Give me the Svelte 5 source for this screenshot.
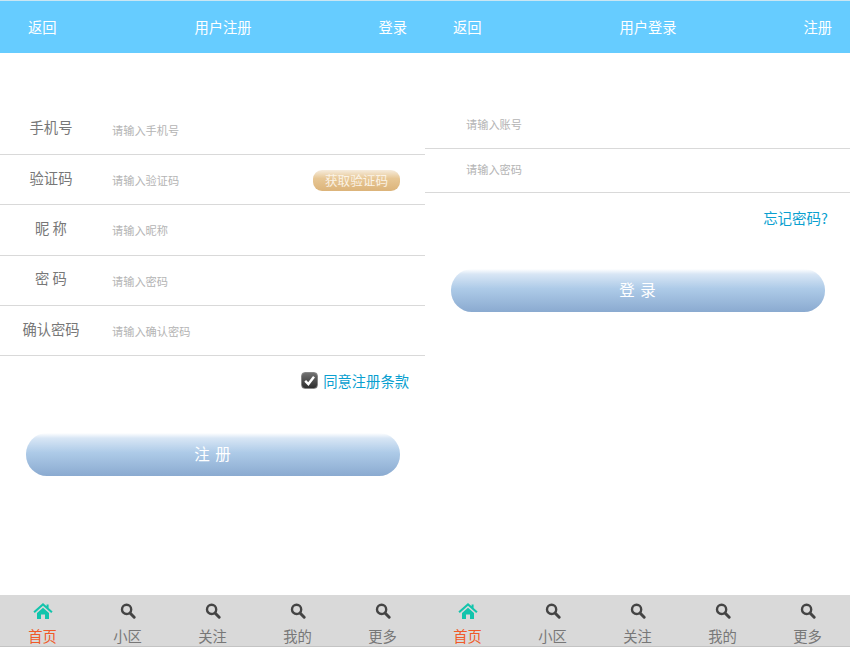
<script lang="ts">
	const registerRows = [
		{ label: '手机号', hint: '请输入手机号' },
		{ label: '验证码', hint: '请输入验证码', code: true },
		{ label: '昵 称', hint: '请输入昵称' },
		{ label: '密 码', hint: '请输入密码' },
		{ label: '确认密码', hint: '请输入确认密码' }
	];
	const loginRows = ['请输入账号', '请输入密码'];
	const tabs = ['首页', '小区', '关注', '我的', '更多'];
</script>

{#snippet header(title: string, action: string)}
	<header class="header">
		<span class="side">返回</span>
		<span class="title">{title}</span>
		<span class="side">{action}</span>
	</header>
{/snippet}

{#snippet footer()}
	<nav class="tabbar">
		{#each tabs as tab, i}
			<div class="tab" class:active={i === 0}>
				{#if i === 0}
					<svg class="icon" viewBox="0 0 20 18" width="20" height="18">
						<path d="M10 1 L13.6 4.2 V2.4 H15.6 V6 L19.6 9.6 L18.2 11 L10 3.8 L1.8 11 L0.4 9.6 Z" fill="#12c4ac" />
						<path d="M4 11 L10 5.8 L16 11 V17 H12 V12.5 H8 V17 H4 Z" fill="#12c4ac" />
					</svg>
				{:else}
					<svg class="icon" viewBox="0 0 20 18" width="20" height="18">
						<circle cx="8.6" cy="7.4" r="4.6" fill="none" stroke="#444" stroke-width="2.4" />
						<path d="M12 11 L16.2 15.2" stroke="#444" stroke-width="3" stroke-linecap="round" />
					</svg>
				{/if}
				<span class="tab-label">{tab}</span>
			</div>
		{/each}
	</nav>
{/snippet}

<div class="screens">
	<section class="pane">
		{@render header('用户注册', '登录')}
		<div class="form register">
			{#each registerRows as row}
				<div class="row">
					<span class="label">{row.label}</span>
					<span class="hint">{row.hint}</span>
					{#if row.code}
						<span class="code-btn">获取验证码</span>
					{/if}
				</div>
			{/each}
		</div>
		<div class="agree">
			<span class="check">
				<svg viewBox="0 0 16 16" width="15" height="15">
					<path d="M3.4 8.4 L6.8 11.8 L12.8 4" fill="none" stroke="#fff" stroke-width="2.6" />
				</svg>
			</span>
			<span class="link">同意注册条款</span>
		</div>
		<div class="submit submit-register">注 册</div>
		{@render footer()}
	</section>

	<section class="pane">
		{@render header('用户登录', '注册')}
		<div class="form login">
			{#each loginRows as hint}
				<div class="row short">
					<span class="hint">{hint}</span>
				</div>
			{/each}
		</div>
		<div class="forgot"><span class="link">忘记密码?</span></div>
		<div class="submit submit-login">登 录</div>
		{@render footer()}
	</section>
</div>

<style>
	:global(body) {
		background: #fff;
	}

	.screens {
		display: grid;
		grid-template-columns: 425px 425px;
		height: 648px;
		overflow: hidden;
		font-family: "Noto Sans CJK SC", "Liberation Sans", sans-serif;
	}

	.pane {
		display: flex;
		flex-direction: column;
		height: 648px;
	}

	.header {
		display: flex;
		align-items: center;
		justify-content: space-between;
		height: 50px;
		border-top: 1px solid #c9e6f3;
		padding: 0 18px 2px 28px;
		flex-shrink: 0;
		background: #66ccff;
		color: #fff;
		font-size: 14.3px;
	}

	.title {
		padding-left: 11px;
	}

	.form {
		margin-top: 51px;
	}

	.form.register {
		margin-top: 51.5px;
	}

	.row {
		display: flex;
		align-items: center;
		height: 50.4px;
		box-sizing: border-box;
		border-bottom: 1px solid #d9d9d9;
	}

	.row.short {
		height: 44px;
		padding-left: 41px;
	}

	.row.short:first-child {
		height: 44.5px;
	}

	.label {
		width: 102px;
		margin-right: 10px;
		padding-bottom: 5px;
		text-align: center;
		font-size: 14.3px;
		color: #777;
	}

	.hint {
		font-size: 11.2px;
		color: #b4b4b4;
		padding-top: 1px;
	}

	.row.short .hint {
		padding-top: 0;
		padding-bottom: 3px;
	}

	.code-btn {
		margin-left: auto;
		margin-right: 25px;
		margin-top: 1px;
		width: 87px;
		height: 21px;
		line-height: 20px;
		text-align: center;
		border-radius: 9px;
		background: linear-gradient(#f6ecdd, #e7c795 40%, #dcb47a);
		color: #fbf3e6;
		font-size: 12.6px;
	}

	.agree {
		display: flex;
		align-items: center;
		justify-content: flex-end;
		gap: 5px;
		height: 20px;
		margin-top: 14.5px;
		padding-right: 16px;
	}

	.check {
		display: flex;
		width: 17px;
		height: 17px;
		border-radius: 4px;
		background: linear-gradient(#707070, #2e2e2e);
		border: 1px solid #888;
		box-sizing: border-box;
		align-items: center;
		justify-content: center;
	}

	.link {
		font-size: 14.3px;
		color: #0a9fd0;
	}

	.submit {
		height: 43px;
		line-height: 41px;
		width: 374px;
		margin-left: 26px;
		text-align: center;
		border-radius: 21px;
		background: linear-gradient(#ffffff, #d8e6f5 12%, #aecbe8 45%, #8aaad0);
		color: #fff;
		font-size: 15.5px;
		letter-spacing: 1px;
		flex-shrink: 0;
	}

	.submit-register {
		margin-top: 42.5px;
	}

	.submit-login {
		margin-top: 42px;
	}

	.forgot {
		display: flex;
		justify-content: flex-end;
		align-items: center;
		height: 20px;
		margin-top: 14.5px;
		padding-right: 22px;
	}

	.forgot .link {
		font-size: 14.5px;
	}

	.tabbar {
		display: grid;
		grid-template-columns: repeat(5, 85px);
		height: 52px;
		margin-top: auto;
		margin-bottom: 1px;
		background: #d9d9d9;
		border-bottom: 1px solid #c4c4c4;
		box-sizing: border-box;
	}

	.tab {
		display: flex;
		flex-direction: column;
		align-items: center;
		padding-top: 7px;
		color: #777;
		font-size: 14.3px;
		box-sizing: border-box;
	}

	.tab.active {
		color: #f05a28;
	}

	.tab-label {
		line-height: 20px;
		margin-top: 6px;
	}
</style>
